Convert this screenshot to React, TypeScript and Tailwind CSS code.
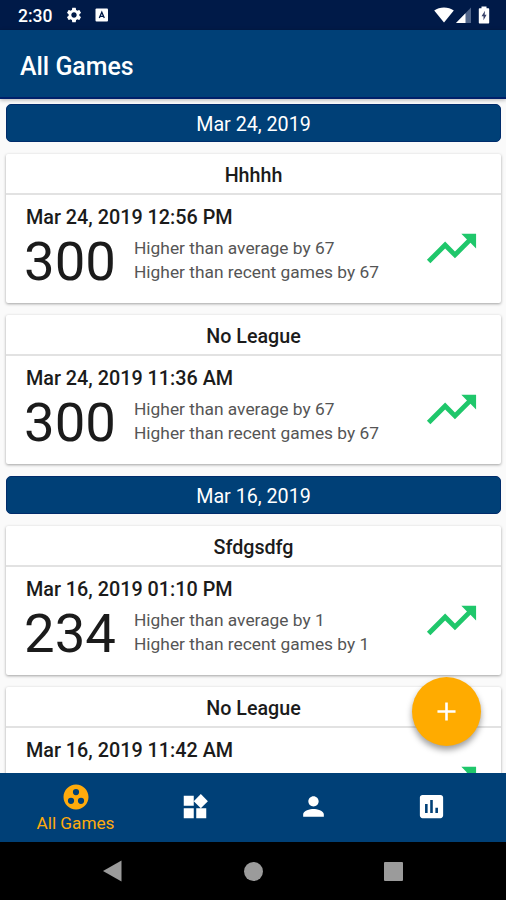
import { MdAdd, MdAssessment, MdGroupWork, MdPerson, MdSettings, MdTrendingUp, MdWidgets } from "react-icons/md";

interface Game {
  league: string;
  playedAt: string;
  result?: { score: number; diff: number };
}

interface GameDay {
  date: string;
  games: Game[];
}

const DAYS: GameDay[] = [
  {
    date: "Mar 24, 2019",
    games: [
      { league: "Hhhhh", playedAt: "Mar 24, 2019 12:56 PM", result: { score: 300, diff: 67 } },
      { league: "No League", playedAt: "Mar 24, 2019 11:36 AM", result: { score: 300, diff: 67 } },
    ],
  },
  {
    date: "Mar 16, 2019",
    games: [
      { league: "Sfdgsdfg", playedAt: "Mar 16, 2019 01:10 PM", result: { score: 234, diff: 1 } },
      { league: "No League", playedAt: "Mar 16, 2019 11:42 AM" },
    ],
  },
];

function StatusBar() {
  return (
    <div className="flex h-[30px] shrink-0 items-center bg-[#001a48] pr-[15px] pl-[18px] text-white">
      <span className="w-[35px] pt-[3px] text-[17.5px] leading-none font-medium">2:30</span>
      <MdSettings className="ml-[12px] size-[18px]" aria-hidden />
      <svg className="ml-[12px] size-[14px]" viewBox="0 0 14 14" aria-hidden>
        <rect x="0.5" y="0.5" width="12.5" height="13" rx="1" fill="white" />
        <path d="M4.3 10 6.8 4.2 9.3 10M5.3 8.3h3" fill="none" stroke="#001a48" strokeWidth="1.3" />
      </svg>
      {/* Wifi */}
      <svg className="ml-auto h-[16px] w-[20px]" viewBox="0 0 20 16" aria-hidden>
        <path d="M10 15.5.2 3.4C5.5-.6 14.5-.6 19.8 3.4z" fill="white" />
      </svg>
      {/* Mobile signal */}
      <svg className="ml-[2px] size-[16px]" viewBox="0 0 16 16" aria-hidden>
        <path d="M0 16 15 0.5V16z" fill="#50658a" />
        <path d="M0 16 9.5 6.2V16z" fill="white" />
      </svg>
      {/* Battery, charging */}
      <svg className="ml-[6px] mr-px h-[18px] w-[12px]" viewBox="0 0 12 18" aria-hidden>
        <path d="M3.5 0.5h5v1.7h1.700c.6 0 1 .4 1 1v13.300c0 .6-.4 1-1 1H1.800c-.6 0-1-.4-1-1V3.200c0-.6.4-1 1-1h1.700z" fill="white" />
        <path d="M7 4.800 3.500 10.300h2v4L8.600 8.800H6.700z" fill="#39436a" />
      </svg>
    </div>
  );
}

function DateBar({ date }: { date: string }) {
  return (
    <div className="flex h-[38px] items-center justify-center rounded-[5px] border border-[#002c6b] bg-[#004077] pt-[3px] text-[19.7px] text-white">
      {date}
    </div>
  );
}

function GameCard({ league, playedAt, result }: Game) {
  return (
    <article className="h-[149px] rounded-[2px] bg-white shadow-[0_1px_3px_rgba(0,0,0,0.36)]">
      <h2 className="flex h-[41px] items-center justify-center border-b-2 border-[#e2e2e2] pt-[4px] text-[19.7px] font-medium">
        {league}
      </h2>
      <div className="flex items-start justify-between pr-[20px] pl-[20px]">
        <div>
          <p className="mt-[11px] text-[19.8px] leading-[24px] font-medium">{playedAt}</p>
          {result && (
            <div className="-mt-px flex items-start">
              <span className="-ml-[2px] w-[110px] text-[54.5px] leading-[64px]">{result.score}</span>
              <div className="mt-[7px] text-[17.35px] leading-[24px] text-[#555]">
                <p>Higher than average by {result.diff}</p>
                <p>Higher than recent games by {result.diff}</p>
              </div>
            </div>
          )}
        </div>
        <MdTrendingUp className="mt-[24px] size-[59px] text-[#1fc76b]" aria-hidden />
      </div>
    </article>
  );
}

function BottomNav() {
  return (
    <nav className="z-10 grid h-[69px] shrink-0 grid-cols-[151px_87px_150px_86px] bg-[#004077] text-white">
      <button className="flex flex-col items-center pt-[9px] text-[#ffab0c]">
        <MdGroupWork className="size-[30px]" aria-hidden />
        <span className="mt-px text-[17.2px] leading-[20px]">All Games</span>
      </button>
      <button className="flex items-center justify-center pb-[2px]" aria-label="Sets">
        <MdWidgets className="size-[30px]" aria-hidden />
      </button>
      <button className="flex items-center justify-center pb-[2px]" aria-label="Profile">
        <MdPerson className="size-[31px]" aria-hidden />
      </button>
      <button className="flex items-center justify-center pb-[2px]" aria-label="Statistics">
        <MdAssessment className="size-[31px]" aria-hidden />
      </button>
    </nav>
  );
}

function SystemNav() {
  return (
    <div className="flex h-[58px] shrink-0 items-center bg-black pl-[103px]">
      <svg className="h-[22px] w-[19px]" viewBox="0 0 19 22" fill="#9b9b9b" aria-hidden>
        <path d="M18.5.5v21L0 11z" />
      </svg>
      <span className="ml-[122px] size-[19px] rounded-full bg-[#9b9b9b]" />
      <span className="ml-[121px] size-[19px] rounded-[1px] bg-[#9b9b9b]" />
    </div>
  );
}

export default function App() {
  return (
    <div className="relative flex h-[900px] w-[506px] flex-col overflow-hidden bg-[#fafafa] font-['Roboto',sans-serif] text-[#1b1b1b]">
      <StatusBar />
      <header className="z-10 flex h-[69px] shrink-0 items-center border-b-2 border-[#00206a] bg-[#004077] pt-[6px] pl-[20px] shadow-[0_1px_4px_rgba(0,0,0,0.3)]">
        <h1 className="text-[24.9px] font-medium text-white">All Games</h1>
      </header>

      <main className="min-h-0 flex-1 overflow-hidden pt-[5px] pr-[5px] pl-[6px]">
        {DAYS.map((day) => (
          <section key={day.date} className="mb-[12px]">
            <DateBar date={day.date} />
            <div className="mt-[12px] flex flex-col gap-[12px]">
              {day.games.map((game) => (
                <GameCard key={game.playedAt} {...game} />
              ))}
            </div>
          </section>
        ))}
      </main>

      <button
        className="absolute top-[677px] left-[412px] z-20 flex size-[69px] items-center justify-center rounded-full bg-[#ffab00] text-white shadow-[0_4px_6px_rgba(0,0,0,0.38)]"
        aria-label="Add game"
      >
        <MdAdd className="size-[31px]" aria-hidden />
      </button>

      <BottomNav />
      <SystemNav />
    </div>
  );
}
